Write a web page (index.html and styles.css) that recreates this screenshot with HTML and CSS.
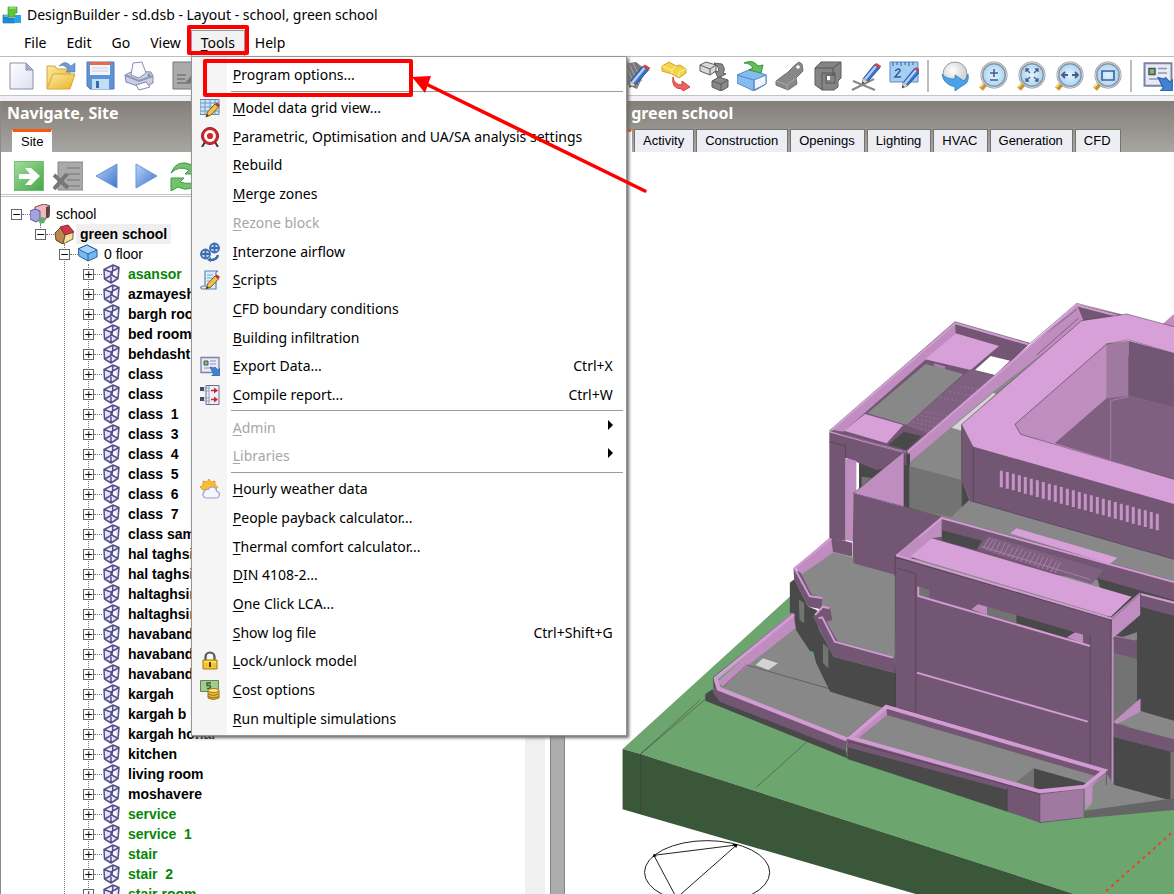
FILE: index.html
```html
<!DOCTYPE html>
<html lang="en">
<head>
<meta charset="utf-8">
<title>DesignBuilder - sd.dsb - Layout - school, green school</title>
<link rel="stylesheet" href="styles.css">
<script src="tree.js" defer></script>
</head>
<body>
<svg class="defs" aria-hidden="true">
  <defs>
    <linearGradient id="gBlue" x1="0" y1="0" x2="1" y2="1"><stop offset="0" stop-color="#b9d4f8"/><stop offset="1" stop-color="#3c73cf"/></linearGradient>
    <linearGradient id="gGreen" x1="0" y1="0" x2="1" y2="1"><stop offset="0" stop-color="#a5dd9c"/><stop offset="1" stop-color="#3fa648"/></linearGradient>
    <linearGradient id="gYellow" x1="0" y1="0" x2="1" y2="1"><stop offset="0" stop-color="#fdeb9e"/><stop offset="1" stop-color="#e9b22c"/></linearGradient>
    <linearGradient id="gPage" x1="0" y1="0" x2="1" y2="1"><stop offset="0" stop-color="#fff"/><stop offset="1" stop-color="#dcdff2"/></linearGradient>
    <radialGradient id="gLens"><stop offset="0" stop-color="#e2f3fe"/><stop offset="1" stop-color="#a5d5f7"/></radialGradient>
    <radialGradient id="gBall" cx=".4" cy=".35"><stop offset="0" stop-color="#fff"/><stop offset="1" stop-color="#d5d5d5"/></radialGradient>
  </defs>
  <symbol id="cube" viewBox="0 0 20 20"><path d="M2 5.500 11 1l6 2.500-1 11-7 4.500-6.500-4zM2 5.500 9 8l8-4.500M9 8v11M11 1l-1 10 6 3.500M10 11l-7.500 4" fill="#e6e4f6" stroke="#53508a" stroke-width="1.500" stroke-linejoin="round"/></symbol>
  <symbol id="pencil" viewBox="0 0 20 20"><path d="m2 19 1-5L13 1.500 18 4.500 7 17z" fill="#3d73c8" stroke="#2c4c94" stroke-width=".8"/><path d="M4.500 15 14.500 3" stroke="#b6d2fb" stroke-width="2"/><path d="m13 1.500 2-1.500 4.500 3L18 4.500z" fill="#d8403c"/><path d="m2 19 1-5L7 17z" fill="#f0cf9d"/><path d="m2 19 .4-2L4 18z" fill="#222"/></symbol>
  <symbol id="ypencil" viewBox="0 0 20 20"><path d="m6 19 1.500-5L15 6l3.500 3L11 17z" fill="#f2c244" stroke="#7c5a22"/><path d="m15 6 2-1.500L20 7l-1.500 2z" fill="#c8302c"/><path d="m6 19 1-3 2 1.500z" fill="#553c22"/></symbol>
  <symbol id="lens" viewBox="0 0 30 30"><path d="m3 28 6-7" stroke="#c9962e" stroke-width="5"/><path d="m2 26 6-6" stroke="#f5dd91" stroke-width="2"/><circle cx="16" cy="14" r="12" fill="url(#gLens)" stroke="#8c929d" stroke-width="3"/><circle cx="16" cy="14" r="12.500" fill="none" stroke="#d6d9df"/></symbol>
  <symbol id="export" viewBox="0 0 20 20"><path d="M1 1.500h18v15H1z" fill="#e8eaf5" stroke="#7c82a2" stroke-width="1.300"/><path d="M4 5h4v4H4z" fill="#7dbf5a" stroke="#4b5268"/><path d="M10 5h6M10 8h6M4 12h6" stroke="#8f97bb"/><path d="m10 11 4 1 1-1 3 3 1.500-1.500V20h-8l2-2z" fill="#3f82d2" stroke="#275ba5" stroke-width=".7"/></symbol>
</svg>

<header class="titlebar">
  <svg class="app-icon" viewBox="0 0 20 18"><path d="M6 1h9v6h-2v4H6z" fill="#5fc636" stroke="#38922a" stroke-width=".6"/><path d="M1 9h5v3h7v5H1z" fill="#1d8cd8" stroke="#146aae" stroke-width=".6"/><path d="M13 9h6v8h-7v-5h1z" fill="#29a4eb"/><path d="M7 2h7M2 10h4" stroke="#b5ef8e"/></svg>
  <h1>DesignBuilder - sd.dsb - Layout - school, green school</h1>
</header>

<nav class="menubar" aria-label="Main">
  <button>File</button><button>Edit</button><button>Go</button><button>View</button>
  <div class="menu-anchor">
    <button class="open" aria-expanded="true"><u>T</u>ools</button>
    <div class="menu" role="menu">
      <button role="menuitem"><i></i><span><u>P</u>rogram options...</span></button>
      <hr>
      <button role="menuitem"><i><svg viewBox="0 0 20 20"><path d="M0 1.500h19v15H0z" fill="#cfe3f7" stroke="#5b84ae"/><path d="M0 5h19M0 9h19M0 13h19M5 2v14M10 2v14M15 2v14" stroke="#6f98c2"/><use href="#ypencil"/></svg></i><span><u>M</u>odel data grid view...</span></button>
      <button role="menuitem"><i><svg viewBox="0 0 20 20"><path d="m5 15-3 5M15 15l3 5" stroke="#383838" stroke-width="2"/><circle cx="10" cy="9" r="8.500" fill="#d1282e" stroke="#8a2029"/><circle cx="10" cy="9" r="4.500" fill="none" stroke="#fff" stroke-width="2.800"/></svg></i><span><u>P</u>arametric, Optimisation and UA/SA analysis settings</span></button>
      <button role="menuitem"><i></i><span><u>R</u>ebuild</span></button>
      <button role="menuitem"><i></i><span><u>M</u>erge zones</span></button>
      <button role="menuitem" disabled><i></i><span><u>R</u>ezone block</span></button>
      <button role="menuitem"><i><svg viewBox="0 0 20 20"><g fill="#bcd6f5" stroke="#3b6cae" stroke-width="1.800"><circle cx="5.500" cy="12" r="4.500"/><circle cx="14.500" cy="6" r="4.500"/><path d="M5.500 7v10M1 12h9M14.500 1v10M10 6h9"/><path d="M10 18q7 0 8-5" fill="none" stroke-width="2.500"/></g><path d="m11 15-4 3 4 2z" fill="#3b6cae"/></svg></i><span><u>I</u>nterzone airflow</span></button>
      <button role="menuitem"><i><svg viewBox="0 0 20 20"><path d="M5 1h13q-3 1-2 4v14H2q-3-2 1-3h2z" fill="#dcebfa" stroke="#5c86b5" stroke-width="1.200"/><path d="M7 5h6M7 8h6M7 11h5" stroke="#7aa2ce"/><use href="#ypencil"/></svg></i><span><u>S</u>cripts</span></button>
      <button role="menuitem"><i></i><span><u>C</u>FD boundary conditions</span></button>
      <button role="menuitem"><i></i><span><u>B</u>uilding infiltration</span></button>
      <button role="menuitem"><i><svg viewBox="0 0 20 20"><use href="#export"/></svg></i><span><u>E</u>xport Data...</span><kbd>Ctrl+X</kbd></button>
      <button role="menuitem"><i><svg viewBox="0 0 20 20"><path d="M6 .500h13v19H6z" fill="#eceef8" stroke="#696f8c"/><path d="M9 1v18" stroke="#9ba1bd"/><path d="M0 2h4v4H0zM0 12h4v4H0z" fill="#39536c"/><path d="M4 3h6M4 6h6M4 13h6M4 16h6" stroke="#9ba1bd"/><path d="M11 5.500h5M11 14.500h5" stroke="#c9252b" stroke-width="1.500"/><path d="m14 2.500 4 3-4 3zM14 11.500l4 3-4 3z" fill="#c9252b"/></svg></i><span><u>C</u>ompile report...</span><kbd>Ctrl+W</kbd></button>
      <hr>
      <button role="menuitem" disabled><i></i><span><u>A</u>dmin</span><svg class="sub" viewBox="0 0 6 10"><path d="M1 0 6 5 1 10z"/></svg></button>
      <button role="menuitem" disabled><i></i><span><u>L</u>ibraries</span><svg class="sub" viewBox="0 0 6 10"><path d="M1 0 6 5 1 10z"/></svg></button>
      <hr>
      <button role="menuitem"><i><svg viewBox="0 0 20 20"><path d="m9 0 2 3 4-1v4l3 2-3 3H3L0 8l3-2V2l4 1z" fill="#f9bd30" stroke="#dd8a1c" stroke-width=".7"/><path d="M6 19a3.500 3.500 0 0 1-2-6q1-3 4-2.500 2-3 5.500-2.500 3 1 3 4 3 1 3 3.500-.5 3.500-3.500 3.500z" fill="#f6f6fe" stroke="#9aa0d0" stroke-width="1.200"/></svg></i><span><u>H</u>ourly weather data</span></button>
      <button role="menuitem"><i></i><span><u>P</u>eople payback calculator...</span></button>
      <button role="menuitem"><i></i><span><u>T</u>hermal comfort calculator...</span></button>
      <button role="menuitem"><i></i><span><u>D</u>IN 4108-2...</span></button>
      <button role="menuitem"><i></i><span><u>O</u>ne Click LCA...</span></button>
      <button role="menuitem"><i></i><span><u>S</u>how log file</span><kbd>Ctrl+Shift+G</kbd></button>
      <button role="menuitem"><i><svg viewBox="0 0 20 20"><path d="M5.500 10V6a4.500 4.500 0 0 1 9 0v4" fill="none" stroke="#555" stroke-width="2.200"/><path d="M3 9h14v9H3z" fill="#f4c52d" stroke="#a87a10"/><path d="M4 11h12" stroke="#fff0a0"/><path d="M10 11v5" stroke="#513d0b" stroke-width="2"/></svg></i><span><u>L</u>ock/unlock model</span></button>
      <button role="menuitem"><i><svg viewBox="0 0 20 20"><path d="M.500.500h18v11H.500z" fill="#a5ca91" stroke="#5b8c4b"/><path d="M11 3H7v2.500h3q2 3-3 3" fill="none" stroke="#355b2c" stroke-width="1.300"/><path d="M8 11v7q5 3 11 0v-7z" fill="#e7bd35" stroke="#97741a"/><ellipse cx="13.500" cy="10.500" rx="5.500" ry="2" fill="#fbe681" stroke="#97741a"/><path d="M8 14q5 3 11 0M8 16.500q5 3 11 0" fill="none" stroke="#97741a"/></svg></i><span><u>C</u>ost options</span></button>
      <button role="menuitem"><i></i><span><u>R</u>un multiple simulations</span></button>
    </div>
  </div>
  <button>Help</button>
</nav>

<div class="toolbar" role="toolbar" aria-label="Standard">
  <div class="group files">
    <button aria-label="New"><svg viewBox="0 0 30 30"><path d="M3 2h16l7 7v19H3z" fill="url(#gPage)" stroke="#8c8fae"/><path d="M19 2v7h7z" fill="#a9aed8" stroke="#8c8fae"/></svg></button>
    <button aria-label="Open"><svg viewBox="0 0 30 30"><path d="M1 28V5h8l2 3h13v7" fill="url(#gYellow)" stroke="#d6a63a"/><path d="m1 28 6-15h22l-5 15z" fill="url(#gYellow)" stroke="#d6a63a"/><path d="M13 5q6-7 12 0l4-3v9h-9l2-3q-4-5-9-3z" fill="#6d9bd5" stroke="#4e7cbb" stroke-width=".6"/></svg></button>
    <button aria-label="Save"><svg viewBox="0 0 30 30"><path d="M2 1h27v27H5l-3-3z" fill="#5e93d8" stroke="#5078b5"/><path d="M5 1h20v13H5z" fill="#f4f5fb"/><path d="M5 1h20v3H5z" fill="#eb6849"/><path d="M7 7h16M7 10h16" stroke="#c8ccdb"/><path d="M7 18h17v10H7z" fill="#c2e0f5"/><path d="M11 20h3v7h-3z" fill="#376da7"/></svg></button>
    <button aria-label="Print"><svg viewBox="0 0 30 30"><path d="m1 14 8-4 18 1 2 4v7l-10 5-17-6z" fill="#c9cce3" stroke="#8488ae"/><path d="m7 14 2-12 9-1 4 11-7 5z" fill="#fafaff" stroke="#8a8eb5"/><path d="m1 14 14 6 14-5" fill="none" stroke="#9196ba" stroke-width="2"/><path d="m12 24 10-3 4 5-11 3z" fill="#fff" stroke="#8488ae"/><circle cx="25" cy="14" r="1.500" fill="#4dba49"/></svg></button>
    <span class="sep"></span>
    <button aria-label="Edit"><svg viewBox="0 0 30 30"><path d="M1 1h28v27H1z" fill="#aaa" stroke="#777"/><path d="M5 14h9M5 18h8M5 22h12" stroke="#777" stroke-width="1.500"/><path d="m14 21 12-15 3 2-11 15z" fill="#777"/></svg></button>
  </div>
  <div class="group tools">
    <button aria-label="Draw block"><svg viewBox="0 0 30 30"><path d="m0 3 13-2 10 8-9 19L0 22z" fill="#777"/><path d="m2 4 12 22M6 3l10 20M10 2l9 18" stroke="#aaa"/><use href="#pencil" x="4" y="1" width="24" height="29"/></svg></button>
    <button aria-label="Move"><svg viewBox="0 0 30 30"><path d="m1 5 7-4 7 4 4-1 6 4v4l-7 5-7-4-10-3z" fill="#f4d34c" stroke="#cba423"/><path d="m1 5 10 4 4-4M11 9v4M18 16v-5l7-3" stroke="#fff0a0" fill="none"/><path d="M12 16q1 8 9 8v-4l8 6-7 4-1-2q-11 0-9-12z" fill="#ee6361" stroke="#d0423e"/></svg></button>
    <button aria-label="Copy"><svg viewBox="0 0 30 30"><g fill="#888" stroke="#5d5d5d"><path d="m1 4 6-3 10 3v6l-6 4-10-4z" fill="#d8d8d8"/><path d="m1 4 10 4 6-4M11 8v6" fill="none"/><path d="m15 2 8 1q4 5 1 9l3 1-8 4-3-7 3 1q2-3-1-6z"/><path d="m13 20 7-4 9 3v7l-7 4-9-4z"/><path d="m13 20 9 3 7-4M22 23v7" fill="none"/></g></svg></button>
    <button aria-label="Drag face"><svg viewBox="0 0 30 30"><path d="m0 14 14-6 15 6v9l-12 7-17-8z" fill="#83bdef" stroke="#5685bf"/><path d="m17 19 12-5v9l-12 6z" fill="#eef5fc" stroke="#5685bf"/><path d="m0 14 17 5v10" fill="none" stroke="#5685bf"/><path d="M7 2q9-4 14 3l5-1-2 8-12-3 4-2q-3-5-9-5z" fill="#64bd58" stroke="#3d923c"/></svg></button>
    <button aria-label="Cut"><svg viewBox="0 0 30 30"><path d="m1 20 8-6 3-2 8-8 4-3 3 2 1 7-7 7 1 6-9 6-12-5z" fill="#888" stroke="#707070"/><path d="m1 20 11 4 9-7M12 24v5" fill="none" stroke="#aaa"/><circle cx="23" cy="6" r="1.800" fill="#fff"/></svg></button>
    <button aria-label="Subtract"><svg viewBox="0 0 30 30"><path d="M2 7 8 1h20v16l-3 3v6l-4 3H9l-7-5z" fill="#858585" stroke="#5f5f5f"/><path d="M2 7h18v8M20 7l8-6M9 29V12h13v10H13v-8h9" fill="none" stroke="#575757"/><path d="M14 15h3v4h-3z" fill="#fff"/></svg></button>
    <button aria-label="Sketch line"><svg viewBox="0 0 30 30"><path d="m1 29 22-11M2 20l22 9" stroke="#888" stroke-width="2"/><use href="#pencil" x="9" y="0" width="22" height="26"/></svg></button>
    <button aria-label="Measure"><svg viewBox="0 0 30 30"><path d="M1 1h28v20H1z" fill="#a6cef2" stroke="#558cc8"/><path d="M4 1v4M8 1v3M12 1v4M16 1v3M20 1v4M24 1v3" stroke="#315f9d"/><path d="M6 10q5-4 5 0l-5 6h6" fill="none" stroke="#315f9d" stroke-width="1.500"/><use href="#pencil" x="11" y="4" width="22" height="26"/></svg></button>
    <span class="sep"></span>
    <button aria-label="Orbit"><svg viewBox="0 0 30 30"><circle cx="15" cy="13" r="12" fill="url(#gBall)" stroke="#999"/><path d="M2 13q4 5 13 5v-4l9 6q3-3 4-7 2 9-6 12l-7 5v-4Q3 23 2 13z" fill="#4ba2e8" stroke="#2975bd" stroke-width=".7"/></svg></button>
    <button aria-label="Zoom"><svg viewBox="0 0 30 30"><use href="#lens"/><path d="M12 12h8M16 8v8M12 19h8" stroke="#4d5b80" stroke-width="1.600"/></svg></button>
    <button aria-label="Zoom fit"><svg viewBox="0 0 30 30"><use href="#lens"/><path d="M10 11V8h3M19 8h3v3M22 17v3h-3M13 20h-3v-3M10 8l4 4M22 8l-4 4M22 20l-4-4M10 20l4-4" fill="none" stroke="#4d5b80" stroke-width="1.300"/></svg></button>
    <button aria-label="Pan"><svg viewBox="0 0 30 30"><use href="#lens"/><path d="M9 14h5M18 14h5M11 11l-3 3 3 3M21 11l3 3-3 3" fill="none" stroke="#4d5b80" stroke-width="1.800"/></svg></button>
    <button aria-label="Zoom window"><svg viewBox="0 0 30 30"><use href="#lens"/><path d="M10 10h12v9H10z" fill="none" stroke="#3f5f95" stroke-width="1.600"/></svg></button>
    <span class="sep"></span>
    <button aria-label="Export"><svg viewBox="0 0 30 30"><use href="#export"/></svg></button>
  </div>
</div>

<main class="workspace">
  <section class="navigator">
    <header class="pane-head">
      <h2>Navigate, Site</h2>
      <div class="tabs" role="tablist"><button class="tab active" role="tab" aria-selected="true">Site</button></div>
    </header>
    <div class="nav-tools">
      <button aria-label="Go"><svg viewBox="0 0 30 30"><path d="M0 0h30v30H0z" fill="url(#gGreen)"/><path d="M.500.500h29v29H.500z" fill="none" stroke="#75bd72"/><path d="M5 13h11l-5-6h6l9 8-9 9h-6l5-6H5z" fill="#fff"/></svg></button>
      <button aria-label="Delete"><svg viewBox="0 0 30 30"><path d="M5 1h25v28H5z" fill="#a9a9a9" stroke="#888"/><path d="M14 7h13M14 13h13M14 19h13M14 25h13" stroke="#858585" stroke-width="1.500"/><path d="m1 14 14 13M14 13 1 28" stroke="#777" stroke-width="4"/></svg></button>
      <button aria-label="Back"><svg viewBox="0 0 30 30"><path d="M25 3v24L4 15z" fill="url(#gBlue)" stroke="#6f95cf"/></svg></button>
      <button aria-label="Forward"><svg viewBox="0 0 30 30"><path d="M5 3v24l21-12z" fill="url(#gBlue)" stroke="#6f95cf"/></svg></button>
      <button aria-label="Refresh"><svg viewBox="0 0 30 30"><path d="M1 12Q7-3 22 4l5-4v13H15l4-4Q9 4 1 12zM29 18Q22 33 8 26l-7 4V17h13l-4 4q12 4 19-3z" fill="#72c36b" stroke="#3e9a43"/></svg></button>
    </div>
    <div class="tree-wrap">
      <ul class="tree root">
        <li><div class="row"><button aria-label="Collapse">−</button><svg viewBox="0 0 20 20"><path d="m5 3 9-3 6 2-1 11-8 3-6-4z" fill="#edb9bd" stroke="#7b4858"/><path d="m16 3 4-1-1 11-3 1z" fill="#654043"/><path d="m0 7 5-2 5 2v9l-4 2-6-3z" fill="#a4a3dd" stroke="#5a5a99"/><path d="m8 15 4-2 4 2-2 4-4 1z" fill="#62ad66"/></svg><span>school</span></div>
          <ul class="tree last">
            <li><div class="row bold"><button aria-label="Collapse">−</button><svg viewBox="0 0 20 20"><path d="m7 9 12-2v8l-10 5-7-4z" fill="#f5df9c" stroke="#77613d"/><path d="m1 9 6-6 4 8-2 9-7-4z" fill="#b98850" stroke="#6c452b"/><path d="m6 3 8-2 6 7-9 3z" fill="#cf3945" stroke="#832b34"/></svg><span class="selected">green school</span></div>
              <ul class="tree">
                <li><div class="row"><button aria-label="Collapse">−</button><svg viewBox="0 0 20 20"><path d="m0 5 9-4 10 5v7l-9 4-9-5z" fill="#73b9f4" stroke="#2d5d9c"/><path d="m0 5 10 5 9-4-10-5zM10 10v7" fill="#a9d6fb" stroke="#2d5d9c"/></svg><span>0 floor</span></div>
                  <ul class="tree rooms">
                    <li class="green">asansor</li><li>azmayeshgah</li><li>bargh room</li><li>bed room</li><li>behdasht</li><li>class</li><li>class</li><li>class  1</li><li>class  3</li><li>class  4</li><li>class  5</li><li>class  6</li><li>class  7</li><li>class samei</li><li>hal taghsim</li><li>hal taghsim</li><li>haltaghsim</li><li>haltaghsim</li><li>havabandi</li><li>havabandi</li><li>havabandi</li><li>kargah</li><li>kargah b</li><li>kargah honar</li><li>kitchen</li><li>living room</li><li>moshavere</li><li class="green">service</li><li class="green">service  1</li><li class="green">stair</li><li class="green">stair  2</li><li class="green">stair room</li>
                  </ul></li>
              </ul></li>
          </ul></li>
      </ul>
      <div class="scrollbar"></div>
    </div>
  </section>
  <div class="splitter"></div>
  <section class="model">
    <header class="pane-head">
      <h2>school, green school</h2>
      <div class="tabs" role="tablist"><button class="tab active layout" role="tab" aria-selected="true">Layout</button><button class="tab" role="tab">Activity</button><button class="tab" role="tab">Construction</button><button class="tab" role="tab">Openings</button><button class="tab" role="tab">Lighting</button><button class="tab" role="tab">HVAC</button><button class="tab" role="tab">Generation</button><button class="tab" role="tab">CFD</button></div>
    </header>
    <svg class="canvas" viewBox="565 152 609 742" preserveAspectRatio="xMinYMin slice" role="img" aria-label="Building model">
      <g class="low" transform="translate(610 540) scale(.3597 .3333)">
        <path class="grass" d="M35 627 505 165 600 300H1568V1062H1290L85 642z"/>
        <path class="soil" d="M35 627 85 642 1290 1062H850L35 808z"/>
        <path class="edge" d="M85 642V822M85 642 265 478M85 642 250 480M407 742 548 605"/>
      </g>
      <g class="up" transform="translate(780 290) scale(.3333)">
        <path class="g2" d="M340 520 770 200 900 90 1182 300V1150H340z"/>
        <path class="d" d="M150 424 525 96 750 160 383 522z"/>
        <path class="m" d="M158 420 525 100 527 130 190 425z"/>
        <path class="l" d="M435 208 527 130 657 168 572 240z"/>
        <path class="g2" d="M262 370 437 222 550 252 380 405z"/>
        <path class="l" d="M192 422 255 372 370 405 320 460z"/>
        <path class="g4" d="M325 465 372 425 425 438 380 480z"/>
        <path class="f" d="M380 405 572 238 645 258 450 435z"/>
        <path class="dots" d="M388 408 463 425M400 397 475 414M412 387 487 402M425 377 500 392M438 365 510 380M480 322 570 340M510 305 590 320M540 290 600 300"/>
        <path d="M585 240 632 198 690 212 645 255z" fill="#fff"/>
        <path class="hatch" d="M462 224 495 234" stroke-width="3"/>
        <path class="d" d="M888 42 1030 76 905 100z"/>
        <path class="m" d="M383 485 750 165 890 42 912 95 640 305 383 522z"/>
        <path class="edge" d="M750 160 890 40 1025 74M148 422 525 95 750 160M770 195 895 85M740 175 890 58"/>
        <path class="rim" d="M152 422 526 100 745 163M383 485 750 168 890 46 1015 78"/>
        <path class="g4" d="M237 500 320 520 390 490V655L237 600z"/>
        <path class="g3" d="M245 560 285 565 245 595z"/>
        <path class="d" d="M148 425 380 488V525L290 540 197 503V752L148 745z"/>
        <path class="rim" d="M150 425 378 488"/>
        <path class="edge" d="M148 422 383 490V522M148 455 197 468V503"/>
        <path class="m" d="M197 505 229 512V600L220 612V755L197 750z"/>
        <path class="g2" d="M388 525 515 412 545 420V570z"/>
        <path class="g3" d="M388 528 545 570V650L515 682 388 655z"/>
        <path class="g1" d="M515 413 640 308 648 312 545 405V422z"/>
        <path class="g4" d="M545 570 568 630 545 652z"/>
        <path class="d" d="M220 610 485 682 345 800V858L218 822z"/>
        <path class="m" d="M220 610 372 485V652z"/>
        <path class="edge" d="M220 610 372 485V650M220 610 485 680"/>
        <path class="m" d="M1148 102 1182 72V112z"/>
        <path class="l" fill-rule="evenodd" d="M545 403 905 92 1040 72 1182 110V645L580 470zM705 403 722 433 825 460 1182 568V190L1045 150 980 162z"/>
        <path class="m" d="M705 403 980 162V325L825 460 722 433z"/>
        <path class="c" d="M980 162 1045 152V318L980 325z"/>
        <path class="d" d="M1045 152 1182 190V352L1045 318z"/>
        <path class="f" d="M980 325 1045 318 1182 352V568L825 460z"/>
        <path class="rimthin" d="M992 508V332L1045 320"/>
        <path class="edge" d="M545 403 905 92 1040 72 1182 110M705 403 980 162 1045 150 1182 190M705 403 722 433 1182 568"/>
        <path class="d" d="M545 403 580 470 1182 642V808L570 632 545 570z"/>
        <path class="edge" d="M545 403V570M580 470V632M570 632 1182 808"/>
        <path class="vents" d="M664 542v50m18-46v50m18-45v50m18-45v50m18-45v50m18-45v50m18-45v50m18-45v50m18-45v50m18-45v50m18-45v50m18-45v50m18-45v50m18-45v50m18-45v50m18-45v50m18-45v50m18-45v50m18-45v50m18-45v50m18-45v50m18-45v50m18-45v50m18-45v50m18-45v50m18-45v50m18-45v50"/>
        <path class="m" d="M45 832 150 742 155 785 75 855z"/>
        <path class="d" d="M150 742 217 758V800L155 785z"/>
        <path class="d" d="M345 800 485 680 1182 872V930L960 870z"/>
        <path class="l" d="M690 730 710 715 1012 803 990 822z"/>
        <path class="g4" d="M485 720 605 752 590 780 487 752z"/>
        <path class="m" d="M350 800 485 685V740L455 745 390 808z"/>
        <path class="f" d="M592 775 625 738 970 840 935 882z"/>
        <path class="hatch" d="m610 772 20-28m-10 34 20-30m-8 35 18-34m-4 38 14-30m-2 36 18-34m-7 38 20-34m-5 38 16-30m-5 36 20-34m-7 38 20-34m-7 38 18-32m-3 36 16-34m-5 38 20-34m-5 38 18-34m-7 40 18-34m-5 38 18-34m-5 38 18-34m-5 40 18-34m-5 36 16-32M605 770l325 98"/>
        <path class="rim" d="M347 800 485 684 1182 876"/>
      </g>
      <g class="low" transform="translate(610 540) scale(.3597 .3333)">
        <path class="g4" d="M1355 115 1568 180V240L1400 300z"/>
        <path class="d" d="M1475 160 1568 185V228L1475 200z"/><path class="rim" d="M1475 162 1568 188"/>
        <path class="d" d="M1400 285 1465 300V358L1400 340z"/><path class="hatch" d="M1400 288 1462 300"/>
        <path class="g3" d="M1398 338 1466 358V560H1398z"/>
        <path class="g4" d="M1465 200 1568 228V545L1465 515z"/>
        <path class="g2" d="M522 98 620 35 790 85V355L630 305 560 165z"/>
        <path class="d" d="M677 -60 795 -20V105L677 70z"/>
        <path class="m" d="M515 80 615 -5 620 38 530 105z"/>
        <path class="g4" d="M500 128 512 118 552 200 575 210 580 265 622 350 795 400V525L612 455 580 400 565 335 548 333 517 270 500 215z"/>
        <path class="d" d="M510 85 530 98 560 163 590 172 588 208 552 200 512 120z"/>
        <path class="d" d="M565 230 590 200 612 205 618 240 602 245 632 303 790 352 795 400 622 350 580 265z"/>
        <path class="rim" d="M615 -4 513 85 555 168 590 174M570 225 592 200 610 205M580 235 590 232 625 305 787 353" stroke-width="4"/>
        <path class="g3" d="M525 178 540 190V250L527 240zM592 310 607 325V385L592 370z"/>
        <path class="g2" d="M300 435 515 250 517 270 560 340 612 455 795 515 660 600z"/>
        <path class="m" d="M300 425 512 218 515 265 385 375 315 440z"/>
        <path class="g1" d="M405 375 425 355 467 370 440 390z"/>
        <path class="edge" d="M315 440 380 375 612 447"/>
        <path class="g4" d="M265 462 285 448 305 480 655 625 660 655 265 482z"/>
        <path class="d" d="M287 420 300 450 660 600 655 632 305 485 288 460z"/>
        <path class="rim wide" d="M510 222 294 415 302 446 658 598"/>
        <path class="edge" d="M512 216 287 412 290 445"/>
        <path class="d" d="M793 48 1395 238V735L852 530 795 500z"/>
        <path class="g3" d="M860 140 888 150V178L860 170z"/>
        <path class="g3" d="M1048 192 1130 218V250L1048 225z"/>
        <path class="g4" d="M1130 220 1335 280 1270 295 1130 250z"/>
        <path class="m" d="M1005 208 1030 187 1048 192V225zM1270 292 1300 272 1315 278V310z"/>
        <path class="d" d="M890 125 1335 255V290L1048 200 890 150z"/>
        <path class="rim" d="M857 140V168L1335 318M853 398 1328 545"/>
        <path class="edge" d="M793 48V500M798 85 850 100V515M793 52 1395 240M1335 285V675"/>
        <path class="m" d="M800 45 850 -6 894 -5 835 50z"/>
        <path class="l" d="M835 50 894 -5 1450 170 1392 230z"/>
        <path class="rim" d="M796 46 1395 236 1475 160"/>
        <path class="m" d="M1395 238 1475 162V225L1400 295V735H1393z"/>
        <path class="edge" d="M1393 238V735M1395 238 1475 160V225L1398 296"/>
        <path class="g2" d="M1410 548 1475 513 1568 542V602z"/>
        <path class="m" d="M1400 545 1475 475V515L1410 552z"/>
        <path class="d" d="M1400 550 1568 598V638L1400 590z"/>
        <path class="g4" d="M1400 590 1560 635V782L1400 735z"/>
        <path class="g3" d="M1558 638H1568V780H1558z"/>
        <path class="g2" d="M1400 735 1558 782 1320 812z"/>
        <path class="g5" d="M1320 812 1568 775V810L1318 835z"/>
        <path class="g2" d="M670 592 770 505 1360 700 1320 742 1195 752z"/>
        <path class="d" d="M768 500 1378 692 1350 708 770 525z"/>
        <path class="m" d="M670 592 768 500 770 525 690 595z"/>
        <path class="g4" d="M1178 685 1325 730 1320 742 1195 752 1178 745z"/>
        <path class="g3" d="M1130 725 1178 685V745z"/>
        <path class="g4" d="M660 615 1105 745V815L660 657z"/>
        <path class="d" d="M660 595 1195 755V848L1105 815V750L660 622z"/>
        <path class="c" d="M1195 757 1318 740 1315 833 1195 848z"/>
        <path class="m" d="M1318 740 1380 692V740L1320 810z"/>
        <path class="g2" d="M1342 735 1380 700 1402 735 1340 790z"/>
        <path class="edge" d="M663 590 768 493 1380 690V735M662 604 1195 762 1320 745 1378 700M1105 745V815M1195 757V848L1315 833M1318 740V833"/>
        <path class="rim wide" d="M668 593 768 500 1374 692 1320 740 1195 754z"/>
        <path d="M1560 880 1370 1062" fill="none" stroke="#e8402c" stroke-width="2" stroke-dasharray="3 4"/>
        <g fill="none" stroke="#222" stroke-width="1"><ellipse cx="270" cy="997" rx="174" ry="95"/><path d="M352 915 122 946 185 1074M352 915 185 1074"/></g>
        <path d="m122 941 8 8-12 3zM340 912h15l-4 12z"/>
      </g>
    </svg>
  </section>
</main>

<div class="mark mark-tools"></div>
<div class="mark mark-options"></div>
<svg class="arrow" viewBox="0 0 240 124" aria-hidden="true"><path d="M234 117 15 10" stroke="#f00" stroke-width="3.500" stroke-linecap="round"/><path d="m1 3 19-1-6 17z" fill="#f00"/></svg>
</body>
</html>
```

FILE: styles.css
```css
* { box-sizing: border-box; }
body { margin: 0; height: 100vh; overflow: hidden; display: flex; flex-direction: column; position: relative; background: #fff; color: #000; font: 14px/20px "Noto Sans", "Open Sans", sans-serif; }
button { border: 0; padding: 0; margin: 0; background: none; font: inherit; color: inherit; }
h1, h2 { margin: 0; }
ul { list-style: none; margin: 0; padding: 0; }
u { text-underline-offset: 2px; }
.defs { position: absolute; width: 0; height: 0; }

.titlebar { flex: none; height: 30px; display: flex; align-items: center; gap: 5px; padding-left: 2px; }
.titlebar h1 { font-size: 14px; font-weight: 400; }
.app-icon { width: 20px; height: 18px; }

.menubar { flex: none; height: 26px; display: flex; padding-left: 14px; }
.menubar > button, .open { padding: 0 10px; height: 26px; }
.menu-anchor { position: relative; z-index: 5; }
.open { background: #f2f2f2; border: 1px solid #9a9a9a; border-width: 1px 1px 0; padding: 0 9px 1px; }
.menu { position: absolute; top: 26px; left: 0; width: 436px; height: 680px; display: flex; flex-direction: column; padding: 4px 3px 2px 2px; border: 1px solid #949494; background: linear-gradient(90deg, #f5f5f5 35px, #fff 35px); box-shadow: 2px 2px 3px #6b6b6b; }
.menu button { flex: 1 1 0; min-height: 0; display: flex; align-items: center; text-align: left; padding-right: 10px; white-space: nowrap; }
.menu button:disabled { color: #a6a6a6; }
.menu i { flex: none; width: 20px; height: 20px; margin: 0 13px 0 6px; }
.menu i svg { display: block; width: 20px; height: 20px; }
.menu span { flex: 1; }
.menu kbd { font: inherit; }
.menu .sub { width: 6px; height: 10px; margin: 0 0 6px; fill: #000; }
.menu hr { flex: none; width: auto; height: 1px; margin: 1px 0 2px 37px; border: 0; background: #9c9c9c; }

.toolbar { flex: none; height: 40px; display: flex; align-items: center; border-top: 1px solid #bdbdbd; border-bottom: 1px solid #c4c4c8; background: #fff; }
.group { display: flex; align-items: center; gap: 8px; }
.group button, .group svg { display: block; width: 30px; height: 30px; }
.files { gap: 9px; width: 200px; padding-left: 7px; margin-right: 423px; flex: none; }
.tools { flex: none; }
.sep { width: 2px; height: 32px; margin-right: 3px; background: #bdbdbd; }
.files .sep { margin-right: 0; }

.workspace { flex: 1; min-height: 0; display: flex; border-top: 5px solid #f0f0f4; }
.navigator { flex: none; width: 550px; display: flex; flex-direction: column; border-left: 1px solid #8a8a8a; }
.model { flex: 1; min-width: 0; display: flex; flex-direction: column; }
.splitter { flex: none; width: 15px; background: #adadad; border: solid #858585; border-width: 0 1px; }
.pane-head { flex: none; height: 51px; display: flex; flex-direction: column; justify-content: space-between; background: linear-gradient(#837e77, #a8a6a3); }
.pane-head h2 { padding: 2px 0 0 6px; color: #fff; font: bold 16px/21px "Noto Sans", "Open Sans", sans-serif; white-space: nowrap; }
.tabs { display: flex; gap: 2px; padding-left: 11px; }
.tab { height: 23px; padding: 0 9px 0 8px; border: 1px solid #77746f; border-bottom: 0; background: #eceef3; font: 13px/22px "Liberation Sans", Arial, sans-serif; }
.tab.active { background: #fff; border-color: #fff; border-top: 3px solid #f4590c; padding: 0 8px; line-height: 20px; }
.model .tabs { padding-left: 5px; }
.layout { width: 62px; }

.nav-tools { flex: none; height: 45px; display: flex; align-items: center; gap: 9px; padding: 6px 0 0 13px; border-bottom: 3px double #c4c4c4; margin: 0 5px 0 0; }
.nav-tools button, .nav-tools svg { display: block; width: 30px; height: 30px; }
.tree-wrap { flex: 1; min-height: 0; overflow: hidden; display: flex; padding-right: 5px; }
.root { flex: 1; padding: 7px 0 0 10px; }
.scrollbar { width: 20px; background: #f0f0f0; }
.tree { font: 14px/20px "Liberation Sans", Arial, sans-serif; }
.tree .tree { position: relative; padding-left: 24px; }
.tree .tree::before { content: ""; position: absolute; left: 29px; top: 0; bottom: 0; border-left: 1px dotted #777; }
.tree .last::before { height: 10px; bottom: auto; }
.row { height: 20px; display: flex; align-items: center; white-space: pre; }
.row button { position: relative; flex: none; width: 11px; height: 11px; margin-right: 8px; border: 1px solid #666; background: #fff; font: 11px/9px "DejaVu Sans", sans-serif; }
.row button::after { content: ""; position: absolute; left: 10px; top: 4px; width: 8px; border-top: 1px dotted #777; }
.row svg { flex: none; width: 20px; height: 20px; }
.row span { margin-left: 2px; padding: 0 4px; }
.row .selected { background: #efefef; }
.bold { font-weight: bold; }
.green { color: #078607; }
.green button { color: #000; }

.canvas { flex: 1; min-height: 0; width: 100%; display: block; background: #fff; }
.canvas path, .canvas ellipse { vector-effect: non-scaling-stroke; }
.l { fill: #d8a0d8; }
.m { fill: #bf8dbf; }
.c { fill: #a079a0; }
.d { fill: #735673; }
.f { fill: #806080; }
.g1 { fill: #d4d4d4; }
.g2 { fill: #888; }
.g3 { fill: #737373; }
.g4 { fill: #494949; }
.g5 { fill: #656565; }
.grass { fill: #6da56f; }
.soil { fill: #3a573a; }
.edge { fill: none; stroke: #423543; stroke-opacity: .5; }
.rim { fill: none; stroke: #d39bd3; stroke-width: 2; }
.rim.wide { stroke-width: 4; }
.rimthin { fill: none; stroke: #a680a6; }
.vents { fill: none; stroke: #c693c6; stroke-width: 3; }
.hatch { fill: none; stroke: #a680a6; }
.dots { fill: none; stroke: #a680a6; stroke-dasharray: 1 3; }

.mark { position: absolute; z-index: 10; border: 4px solid #f00; border-radius: 2px; pointer-events: none; }
.mark-tools { left: 187px; top: 25px; width: 62px; height: 30px; }
.mark-options { left: 203px; top: 59px; width: 210px; height: 38px; }
.arrow { position: absolute; z-index: 10; left: 411px; top: 74px; width: 240px; height: 124px; pointer-events: none; }
```

FILE: tree.js
```js
for (const item of document.querySelectorAll('.rooms li')) {
  const name = item.textContent;
  item.innerHTML = '<div class="row bold"><button aria-label="Expand">+</button><svg viewBox="0 0 20 20"><use href="#cube"/></svg><span></span></div>';
  item.querySelector('span').textContent = name;
}
```
